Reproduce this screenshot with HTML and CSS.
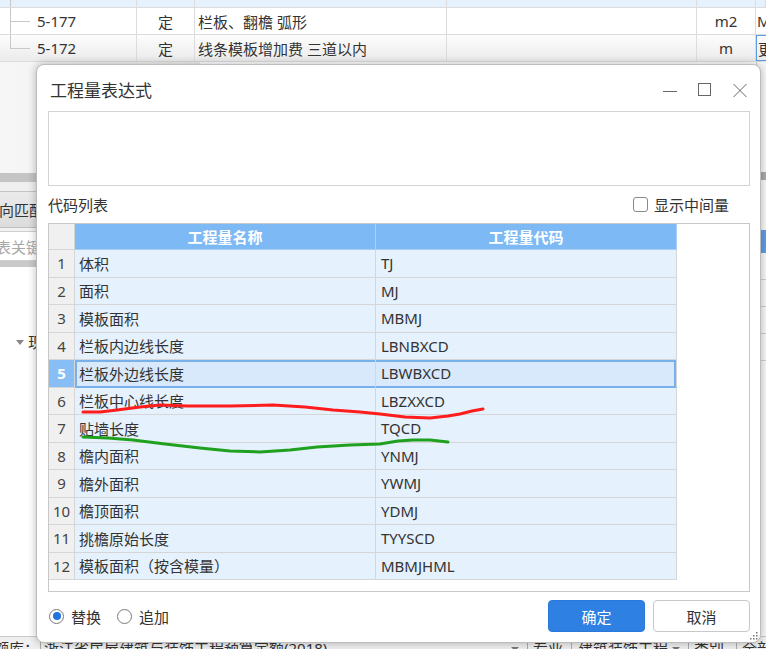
FILE: index.html
```html
<!DOCTYPE html>
<html lang="zh-CN">
<head>
<meta charset="utf-8">
<title>工程量表达式</title>
<link rel="stylesheet" href="styles.css">
</head>
<body>
<div class="app">
  <div class="bg-grid">
    <div class="bg-row head">
      <div class="c"><span class="tree line-only"></span></div><div class="c"></div><div class="c"></div><div class="c"></div><div class="c"></div><div class="c"></div>
    </div>
    <div class="bg-row">
      <div class="c"><span class="tree cont"></span>5-177</div>
      <div class="c center">定</div>
      <div class="c name">栏板、翻檐 弧形</div>
      <div class="c"></div>
      <div class="c center">m2</div>
      <div class="c last">M</div>
    </div>
    <div class="bg-row alt">
      <div class="c"><span class="tree"></span>5-172</div>
      <div class="c center">定</div>
      <div class="c name">线条模板增加费 三道以内</div>
      <div class="c"></div>
      <div class="c center">m</div>
      <div class="c last sel">更</div>
    </div>
  </div>

  <div class="middle">
    <div class="left-panel">
      <div class="lp-top"></div>
      <div class="lp-bar"></div>
      <div class="lp-gap"></div>
      <div class="lp-match">向匹配</div>
      <div class="lp-gap2"></div>
      <div class="lp-search">表关键字</div>
      <div class="lp-bar2"></div>
      <div class="lp-tree"><span class="caret"></span>现浇</div>
    </div>
    <div class="main-area"></div>
    <div class="right-strip">
      <div class="rs-top"></div>
      <div class="rs-dark"></div>
      <div class="rs-gap"></div>
      <div class="rs-blue"></div>
      <div class="rs-row"></div><div class="rs-row"></div><div class="rs-row"></div><div class="rs-row"></div>
    </div>
  </div>

  <div class="statusbar">
    <span class="sb-label first">额库：</span>
    <span class="sb-field wide">浙江省房屋建筑与装饰工程预算定额(2018)<span class="sb-arrow"></span></span>
    <span class="sb-label sep w44">专业</span>
    <span class="sb-field mid">建筑装饰工程<span class="sb-arrow"></span></span>
    <span class="sb-label sep w48">类别</span>
    <span class="sb-label sep">全部</span>
  </div>
</div>

<div class="dialog">
  <div class="titlebar">
    <span class="title">工程量表达式</span>
    <div class="controls">
      <svg class="ic ic-min" width="14" height="14" viewBox="0 0 14 14"><path d="M0 8.5H14" stroke="#666" stroke-width="1"/></svg>
      <svg class="ic ic-max" width="14" height="14" viewBox="0 0 14 14"><rect x="0.5" y="0.5" width="12" height="12" fill="none" stroke="#666" stroke-width="1"/></svg>
      <svg class="ic ic-close" width="14" height="14" viewBox="0 0 14 14"><path d="M0.5 1L13.5 14M13.5 1L0.5 14" stroke="#666" stroke-width="1"/></svg>
    </div>
  </div>
  <div class="expr"></div>
  <div class="list-head">
    <span>代码列表</span>
    <label class="check"><span class="box"></span>显示中间量</label>
  </div>
  <div class="table-box">
    <div class="tbl">
      <div class="hn"></div><div class="hc">工程量名称</div><div class="hc">工程量代码</div>

      <div class="rn">1</div><div class="cn">体积</div><div class="cc">TJ</div>
      <div class="rn">2</div><div class="cn">面积</div><div class="cc">MJ</div>
      <div class="rn">3</div><div class="cn">模板面积</div><div class="cc">MBMJ</div>
      <div class="rn">4</div><div class="cn">栏板内边线长度</div><div class="cc">LBNBXCD</div>
      <div class="rn on">5</div><div class="cn on">栏板外边线长度</div><div class="cc on">LBWBXCD</div>
      <div class="rn">6</div><div class="cn">栏板中心线长度</div><div class="cc">LBZXXCD</div>
      <div class="rn">7</div><div class="cn">贴墙长度</div><div class="cc">TQCD</div>
      <div class="rn">8</div><div class="cn">檐内面积</div><div class="cc">YNMJ</div>
      <div class="rn">9</div><div class="cn">檐外面积</div><div class="cc">YWMJ</div>
      <div class="rn">10</div><div class="cn">檐顶面积</div><div class="cc">YDMJ</div>
      <div class="rn">11</div><div class="cn">挑檐原始长度</div><div class="cc">TYYSCD</div>
      <div class="rn">12</div><div class="cn">模板面积（按含模量）</div><div class="cc">MBMJHML</div>
    </div>
  </div>
  <div class="footer">
    <label class="radio on"><span class="ring"></span>替换</label>
    <label class="radio"><span class="ring"></span>追加</label>
    <div class="btns">
      <button class="btn ok">确定</button>
      <button class="btn cancel">取消</button>
    </div>
  </div>
  <svg class="grip" width="8" height="8" viewBox="0 0 8 8">
    <rect x="6" y="0" width="1.5" height="1.5" fill="#777"/>
    <rect x="3" y="3" width="1.5" height="1.5" fill="#777"/>
    <rect x="6" y="3" width="1.5" height="1.5" fill="#777"/>
    <rect x="0" y="6" width="1.5" height="1.5" fill="#777"/>
    <rect x="3" y="6" width="1.5" height="1.5" fill="#777"/>
    <rect x="6" y="6" width="1.5" height="1.5" fill="#777"/>
  </svg>
</div>

<svg class="scribble" width="766" height="649" viewBox="0 0 766 649">
  <polyline points="83,412 100,412 117,410 140,407 160,405 187,406 230,406 273,405 305,407 333,410 360,412 380,414 405,417 430,418 448,416 460,414 472,411 483,409" fill="none" stroke="#ff1c1c" stroke-width="3" stroke-linejoin="round" stroke-linecap="round"/>
  <polyline points="83,437 108,438 133,440 165,444 200,448 230,451 260,452 290,450 317,447 350,445 380,444 398,441 413,440 430,440 448,442" fill="none" stroke="#1fa11f" stroke-width="3" stroke-linejoin="round" stroke-linecap="round"/>
</svg>
</body>
</html>
```

FILE: styles.css
```css
* { box-sizing: border-box; margin: 0; padding: 0; }
html, body { width: 766px; height: 649px; overflow: hidden; }
body {
  font-family: "Noto Sans", "Noto Sans CJK SC", sans-serif;
  font-size: 15px;
  color: #333;
  background: #fff;
  position: relative;
}

/* ---------- background application ---------- */
.app { display: flex; flex-direction: column; height: 649px; }

.bg-grid { flex: none; }
.bg-row {
  display: grid;
  grid-template-columns: 137px 58px 252px 250px 59px 10px;
  height: 27px;
  border-bottom: 1px solid #dcdcdc;
  background: #fff;
}
.bg-row.head { height: 8px; background: #e5f1fc; }
.bg-row.alt { background: linear-gradient(#fdfdfd, #ebebeb); }
.c {
  border-right: 1px solid #dcdcdc;
  display: flex;
  align-items: center;
  white-space: nowrap;
  overflow: hidden;
  height: 100%;
}
.c.center { justify-content: center; }
.c.name { padding-left: 3px; }
.c.last { border-right: none; padding-left: 1px; }
.c.sel { border: 1px solid #5b9be0; border-right: none; }
.tree {
  align-self: stretch;
  width: 20px;
  margin-left: 10px;
  margin-right: 7px;
  flex: none;
  background:
    linear-gradient(#c8c8c8, #c8c8c8) left top / 1px 14px no-repeat,
    linear-gradient(#c8c8c8, #c8c8c8) left 13px / 20px 1px no-repeat;
}
.tree.cont {
  background:
    linear-gradient(#c8c8c8, #c8c8c8) left top / 1px 100% no-repeat,
    linear-gradient(#c8c8c8, #c8c8c8) left 13px / 20px 1px no-repeat;
}
.tree.line-only {
  background: linear-gradient(#c8c8c8, #c8c8c8) left top / 1px 100% no-repeat;
}

.middle { flex: 1; display: flex; min-height: 0; }
.left-panel { width: 200px; display: flex; flex-direction: column; }
.lp-top { height: 111px; background: linear-gradient(90deg, #f6f6f6, #eeeeee); }
.lp-bar { height: 9px; background: #c4c4c4; }
.lp-gap { height: 10px; background: #efefef; border-bottom: 1px solid #c4c4c4; }
.lp-match {
  height: 36px;
  display: flex; align-items: center;
  background: linear-gradient(#ebebeb, #dcdcdc);
  border-bottom: 1px solid #bdbdbd;
  color: #333;
  text-indent: -1px;
}
.lp-gap2 { height: 3px; background: #f2f2f2; }
.lp-search {
  height: 30px;
  display: flex; align-items: center;
  background: #fff;
  border-top: 1px solid #cfcfcf;
  border-bottom: 1px solid #cfcfcf;
  color: #a8a8a8;
  margin-left: -4px;
}
.lp-bar2 { height: 6px; background: #cacaca; }
.lp-tree { flex: 1; background: #fff; padding-top: 65px; padding-left: 16px; display: flex; align-items: flex-start; gap: 4px; color: #333; line-height: 20px; }
.caret {
  width: 0; height: 0; margin-top: 8px;
  border-left: 4px solid transparent;
  border-right: 4px solid transparent;
  border-top: 5px solid #888;
}
.main-area { flex: 1; background: #fff; }
.right-strip { width: 10px; display: flex; flex-direction: column; background: #f7f7f7; border-left: 1px solid #d0d0d0; }
.rs-top { height: 110px; }
.rs-dark { height: 8px; background: #a9a9a9; }
.rs-gap { height: 50px; }
.rs-blue { height: 23px; background: #5d9de6; }
.rs-row { height: 27px; border-bottom: 1px solid #cfcfcf; }

.statusbar {
  height: 13px;
  flex: none;
  display: flex;
  align-items: flex-start;
  background: #efefef;
  border-top: 1px solid #c8c8c8;
  line-height: 22px;
  white-space: nowrap;
  overflow: hidden;
  color: #333;
}
.sb-label { padding: 0 5px; flex: none; }
.sb-label.first { width: 46px; margin-left: -6px; padding: 0; }
.sb-label.sep { border-left: 1px solid #aaa; }
.sb-label.w44 { width: 44px; }
.sb-label.w48 { width: 48px; }
.sb-field { display: flex; align-items: flex-start; border-left: 1px solid #aaa; padding-left: 3px; flex: none; overflow: hidden; }
.sb-field.wide { width: 487px; }
.sb-field.mid { width: 117px; padding-left: 6px; }
.sb-arrow { margin-left: auto; margin-right: 8px; margin-top: 10px; width: 0; height: 0; flex: none; border-left: 4px solid transparent; border-right: 4px solid transparent; border-top: 4px solid #777; }

/* ---------- dialog ---------- */
.dialog {
  position: absolute;
  left: 36px;
  top: 64px;
  width: 725px;
  height: 579px;
  background: #fff;
  border: 1px solid #bcbcbc;
  border-radius: 8px;
  box-shadow: 0 0 9px rgba(0, 0, 0, 0.28);
  padding: 0 10px 0 11px;
  display: flex;
  flex-direction: column;
}
.titlebar {
  height: 46px;
  flex: none;
  padding-top: 3px;
  display: flex;
  align-items: center;
}
.title { font-size: 17px; color: #333; padding-left: 2px; font-family: "Noto Sans CJK SC", sans-serif; }
.controls { margin-left: auto; display: flex; align-items: center; padding-right: 3px; }
.ic { display: block; }
.ic-max { margin-left: 21px; }
.ic-close { margin-left: 21px; }

.expr { height: 75px; flex: none; border: 1px solid #d3d3d3; background: #fff; }

.list-head {
  height: 37px;
  flex: none;
  display: flex;
  align-items: center;
  justify-content: space-between;
  font-family: "Noto Sans CJK SC", sans-serif;
}
.check { display: flex; align-items: center; gap: 6px; padding-right: 21px; }
.box { width: 15px; height: 15px; border: 1px solid #8a8a8a; border-radius: 3px; background: #fff; }

.table-box {
  height: 369px;
  flex: none;
  border: 1px solid #c8c8c8;
  background: #fff;
}
.tbl {
  display: grid;
  grid-template-columns: 26px 301px 301px;
  grid-template-rows: 26px;
  grid-auto-rows: 27.5px;
}
.tbl > div {
  display: flex;
  align-items: center;
  border-right: 1px solid #d6d6d6;
  border-bottom: 1px solid #d6d6d6;
  white-space: nowrap;
  overflow: hidden;
}
.hn { background: #f0f0f0; }
.hc {
  background: #7db9f5;
  color: #fff;
  font-weight: bold;
  justify-content: center;
  border-right-color: #a9d0f9 !important;
  border-bottom-color: #a9cdf2 !important;
  font-family: "Noto Sans CJK SC", sans-serif;
}
.rn { background: #f0f0f0; justify-content: center; color: #444; }
.cn { background: #e5f1fd; padding-left: 4px; }
.cc { background: #e5f1fd; padding-left: 5px; }
.rn.on { background: #86bef5; color: #fff; font-weight: bold; }
.cn.on {
  background: #d8e9fb;
  box-shadow: inset 2px 0 0 #78b0ea, inset 0 2px 0 #78b0ea, inset 0 -1px 0 #78b0ea;
}
.cc.on {
  background: #d8e9fb;
  box-shadow: inset -2px 0 0 #78b0ea, inset 0 2px 0 #78b0ea, inset 0 -1px 0 #78b0ea;
}
.tbl > .cn.on, .tbl > .cc.on { border-bottom-color: #78b0ea; }

.footer {
  height: 50px;
  flex: none;
  padding: 8px 0 10px;
  display: flex;
  align-items: center;
  font-family: "Noto Sans CJK SC", sans-serif;
}
.radio { display: flex; align-items: center; gap: 7px; margin-left: 1px; }
.radio + .radio { margin-left: 16px; }
.ring {
  width: 15px; height: 15px;
  border: 1px solid #7a7a7a;
  border-radius: 50%;
  background: #fff;
  display: flex; align-items: center; justify-content: center;
}
.radio.on .ring::after {
  content: "";
  width: 8px; height: 8px;
  border-radius: 50%;
  background: #1f74e0;
}
.btns { margin-left: auto; display: flex; gap: 8px; }
.btn {
  width: 97px;
  height: 32px;
  border-radius: 4px;
  font-family: "Noto Sans CJK SC", sans-serif;
  font-size: 15px;
}
.btn.ok { background: #2e80e2; border: 1px solid #2a78d8; color: #fff; }
.btn.cancel { background: #fff; border: 1px solid #c8c8c8; color: #333; }

.grip { position: absolute; right: 2px; bottom: 2px; }

.scribble { position: absolute; left: 0; top: 0; pointer-events: none; }
```
